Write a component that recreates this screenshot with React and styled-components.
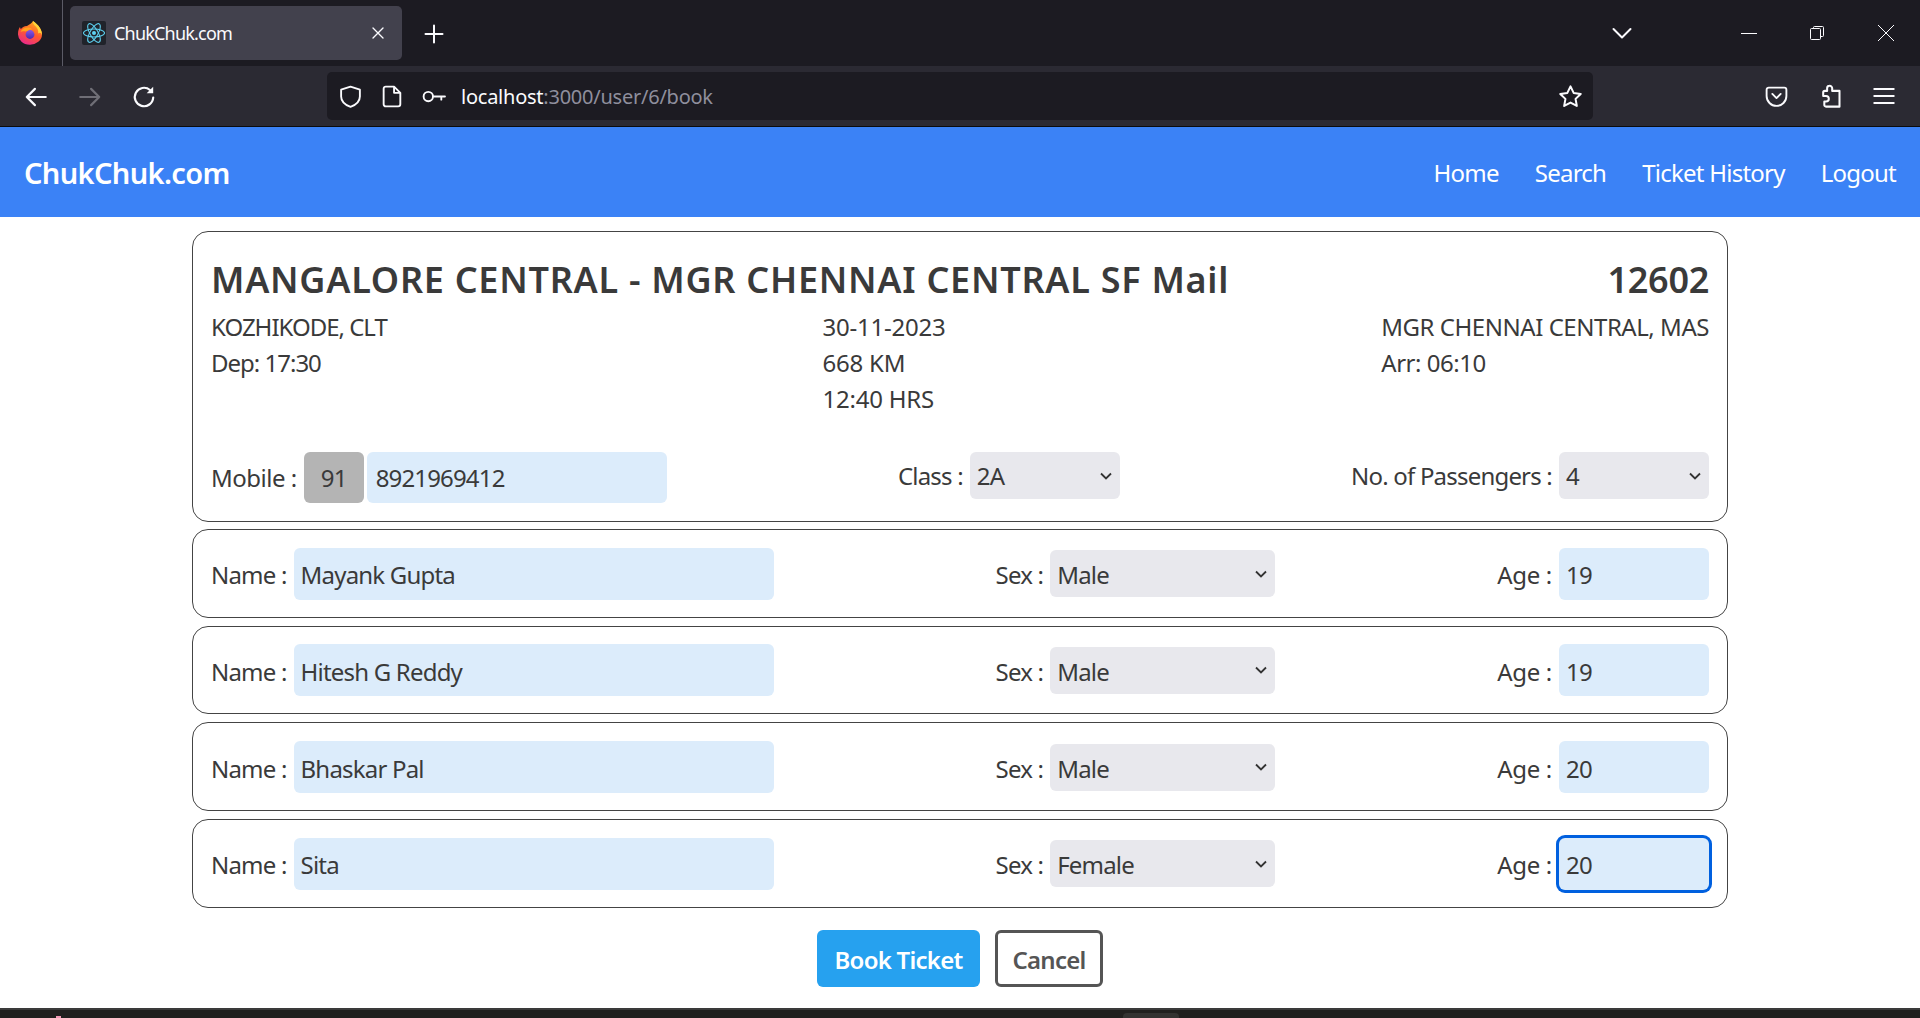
import React from 'react';
import styled, { createGlobalStyle } from 'styled-components';

const FONT = '"Noto Sans", "Open Sans", sans-serif';

const GlobalStyle = createGlobalStyle`
    * { box-sizing: border-box; }
    html, body { margin: 0; padding: 0; height: 100%; background: #fff; }
    body { font-family: ${FONT}; color: #3a3a3a; letter-spacing: -0.8px; overflow: hidden; }
`

const Page = styled.div`
    display: flex;
    flex-direction: column;
    height: 1018px;
    overflow: hidden;
`

/* browser frame */
const TabBar = styled.div`
    display: flex;
    align-items: stretch;
    height: 66px;
    flex-shrink: 0;
    background: #1c1b22;
    color: #fbfbfe;
`
const AppCell = styled.div`
    display: flex;
    align-items: center;
    justify-content: center;
    width: 63px;
    padding-right: 3px;
    border-right: 1px solid #5b5b66;
    margin-right: 7px;
`
const Tab = styled.div`
    display: flex;
    align-items: center;
    align-self: center;
    width: 332px;
    height: 54px;
    padding: 0 12px;
    border-radius: 5px;
    background: #42414d;
`
const Favicon = styled.div`
    display: flex;
    align-items: center;
    justify-content: center;
    width: 24px;
    height: 24px;
    margin-right: 8px;
    border-radius: 2px;
    background: #20232a;
`
const TabTitle = styled.span`
    flex: 1;
    font-size: 18px;
`
const IconBox = styled.div`
    display: flex;
    align-items: center;
    justify-content: center;
    flex-shrink: 0;
    width: ${props => props.$w || 54}px;
    padding-top: ${props => props.$drop || 0}px;
    color: ${props => props.$dim ? '#6f6e76' : '#fbfbfe'};
`
const Spacer = styled.div`
    flex: 1;
`
const ToolBar = styled.div`
    display: flex;
    align-items: stretch;
    height: 60px;
    flex-shrink: 0;
    padding-left: 9px;
    background: #2b2a33;
`
const UrlBar = styled.div`
    display: flex;
    align-items: center;
    align-self: center;
    width: 1266px;
    height: 48px;
    margin-left: 156px;
    margin-right: 156px;
    padding-left: 2px;
    border-radius: 5px;
    background: #1c1b22;
    color: #fbfbfe;
    font-size: 20px;
    letter-spacing: -0.24px;
`
const UrlText = styled.div`
    flex: 1;
    margin-left: 7px;
`
const UrlDim = styled.span`
    color: #8f8f9d;
`
const Separator = styled.div`
    height: 1px;
    flex-shrink: 0;
    background: #0c0c0d;
`

/* site */
const Nav = styled.nav`
    display: flex;
    align-items: center;
    justify-content: space-between;
    height: 90px;
    flex-shrink: 0;
    padding: 0 24px;
    background: #3b82f6;
    color: #fff;
`
const Brand = styled.div`
    font-size: 29px;
    font-weight: 600;
    letter-spacing: -0.65px;
`
const NavLinks = styled.div`
    display: flex;
    gap: 36px;
`
const NavLink = styled.a`
    font-size: 24px;
    letter-spacing: -0.76px;
`
const Main = styled.main`
    width: 1536px;
    margin: 14px auto 0;
`
const Card = styled.section`
    height: 291px;
    margin-bottom: 7px;
    padding: 21px 18px 18px;
    border: 1px solid #444;
    border-radius: 16px;
`
const TitleRow = styled.div`
    display: flex;
    justify-content: space-between;
    margin-bottom: 2px;
`
const Title = styled.h1`
    margin: 0;
    font-size: 36px;
    line-height: 54px;
    font-weight: 600;
    letter-spacing: ${props => props.$spacing}px;
`
const Details = styled.div`
    display: flex;
    justify-content: space-between;
    height: 108px;
    margin-bottom: 35px;
`
const DetailCol = styled.div`
    font-size: 24px;
    line-height: 36px;
    letter-spacing: ${props => props.$spacing}px;
`
const ContactRow = styled.div`
    display: flex;
    justify-content: space-between;
    align-items: flex-start;
`
const Group = styled.div`
    display: flex;
    align-items: center;
    font-size: 24px;
`
const Label = styled.label`
    margin-right: 7px;
    letter-spacing: ${props => props.$spacing || -0.8}px;
`
const Prefix = styled.div`
    display: flex;
    align-items: center;
    justify-content: center;
    width: 60px;
    height: 51px;
    margin-right: 3px;
    border-radius: 6px;
    background: #b4b4b4;
`
const Field = styled.input`
    width: ${props => props.$w}px;
    height: ${props => props.$h || 52}px;
    padding: 0 ${props => props.$pad || 7}px;
    border: 0;
    border-radius: 6px;
    outline: 0;
    background: #dcecfb;
    color: inherit;
    font: inherit;
    letter-spacing: ${props => props.$spacing || -0.8}px;
    box-shadow: ${props => props.$focused ? '0 0 0 3px #0060df' : 'none'};
`
const Choice = styled.select`
    appearance: none;
    width: ${props => props.$w}px;
    height: 47px;
    padding: 0 7px;
    border: 0;
    border-radius: 6px;
    background-color: #e8e8ed;
    background-image: url("data:image/svg+xml,%3Csvg xmlns='http://www.w3.org/2000/svg' width='14' height='14' viewBox='0 0 14 14'%3E%3Cpath d='M2 4.5l5 5 5-5' fill='none' stroke='%23333' stroke-width='1.8'/%3E%3C/svg%3E");
    background-repeat: no-repeat;
    background-position: right 7px center;
    color: inherit;
    font: inherit;
    letter-spacing: inherit;
`
const RowList = styled.div`
    display: flex;
    flex-direction: column;
    gap: 8px;
`
const PassengerRow = styled.div`
    display: flex;
    align-items: center;
    justify-content: space-between;
    height: 88.67px;
    padding: 1px 18px 0;
    border: 1px solid #444;
    border-radius: 16px;

    ${Label}, ${Field}, ${Choice} {
        padding-top: 2px;
    }
`
const Actions = styled.div`
    display: flex;
    justify-content: center;
    gap: 15px;
    margin-top: 22px;
`
const PrimaryButton = styled.button`
    width: 163px;
    height: 57px;
    padding: 2px 0 0;
    border: 0;
    border-radius: 6px;
    background: #26a1ef;
    color: #fff;
    font: 600 24px ${FONT};
    letter-spacing: -0.75px;
`
const GhostButton = styled(PrimaryButton)`
    width: 108px;
    border: 3px solid #555;
    background: #fff;
    color: #555;
`
const TaskBar = styled.div`
    display: flex;
    align-items: flex-end;
    height: 10px;
    margin-top: auto;
    flex-shrink: 0;
    border-top: 2px solid #3a3a3a;
    background: #20201e;
`
const TaskDot = styled.div`
    width: 5px;
    height: 2px;
    margin-left: 56px;
    background: #f19ab5;
`
const TaskButton = styled.div`
    width: 56px;
    height: 5px;
    margin-left: 1062px;
    border-radius: 4px 4px 0 0;
    background: #333331;
`

function Stroke({ size = 24, width = 2, children }) {
    return (
        <svg width={size} height={size} viewBox="0 0 24 24" fill="none" stroke="currentColor"
            strokeWidth={width} strokeLinecap="round" strokeLinejoin="round">
            {children}
        </svg>
    )
}

function FirefoxLogo() {
    return (
        <svg width="24" height="24" viewBox="0 0 24 24">
            <defs>
                <linearGradient id="ffBody" x1="0.8" y1="0.05" x2="0.35" y2="1">
                    <stop offset="0" stopColor="#ffb01f" />
                    <stop offset="0.5" stopColor="#ff5a2c" />
                    <stop offset="1" stopColor="#ea2a8a" />
                </linearGradient>
                <linearGradient id="ffCore" x1="0.5" y1="0" x2="0.5" y2="1">
                    <stop offset="0" stopColor="#8a55e6" />
                    <stop offset="1" stopColor="#4a2bb0" />
                </linearGradient>
            </defs>
            <path d="M15 0c2 2.300 5 3.800 7 7 1.400 2.400 2 4.600 2 6.500A12 10.500 0 0 1 0 13c0-3 .8-5.500 2-7 .1.900.4 1.500.9 2C4 6.400 6 5.200 9 5c2-1.400 4.500-2.500 6-5z" fill="url(#ffBody)" />
            <path d="M15 0c-.4 2.200.6 3.600 2.300 5 2.400 2 3.300 4.800 2.900 7.500 1.600-1.400 3-.6 3.800 1.500C24 9 21 4 15 0z" fill="#ffd43a" />
            <circle cx="12" cy="13.500" r="4.400" fill="url(#ffCore)" />
            <path d="M2.500 11c1-3.200 4.500-5 8-4.500 1.800.3 3.200 1.200 4 2.400-2-.6-3.500-.2-4.600.8L7.500 10.500C5.500 10 3.800 10 2.500 11z" fill="#ffa11f" />
        </svg>
    )
}

function ReactLogo() {
    return (
        <svg width="22" height="22" viewBox="-11.500 -11.500 23 23" fill="none" stroke="#5ed3f3" strokeWidth="1.100">
            <circle r="2.100" fill="#5ed3f3" stroke="none" />
            <ellipse rx="11" ry="4.200" />
            <ellipse rx="11" ry="4.200" transform="rotate(60)" />
            <ellipse rx="11" ry="4.200" transform="rotate(120)" />
        </svg>
    )
}

function PassengerFields({ name, sex, age, focused }) {
    return (
        <PassengerRow>
            <Group>
                <Label>Name :</Label>
                <Field $w={480} defaultValue={name} />
            </Group>
            <Group>
                <Label>Sex :</Label>
                <Choice $w={225} defaultValue={sex}>
                    <option>Male</option>
                    <option>Female</option>
                </Choice>
            </Group>
            <Group>
                <Label $spacing={-0.3}>Age :</Label>
                <Field $w={150} $focused={focused} defaultValue={age} />
            </Group>
        </PassengerRow>
    )
}

const passengers = [
    { name: 'Mayank Gupta', sex: 'Male', age: 19 },
    { name: 'Hitesh G Reddy', sex: 'Male', age: 19 },
    { name: 'Bhaskar Pal', sex: 'Male', age: 20 },
    { name: 'Sita', sex: 'Female', age: 20, focused: true },
]

function App() {
    return (
        <Page>
            <GlobalStyle />
            <TabBar>
                <AppCell><FirefoxLogo /></AppCell>
                <Tab>
                    <Favicon><ReactLogo /></Favicon>
                    <TabTitle>ChukChuk.com</TabTitle>
                    <IconBox $w={24}>
                        <Stroke size={20} width={1.600}><path d="M6 6l12 12M18 6L6 18" /></Stroke>
                    </IconBox>
                </Tab>
                <IconBox $w={64} $drop={2}>
                    <Stroke size={24} width={2}><path d="M12 3.500v17M3.500 12h17" /></Stroke>
                </IconBox>
                <Spacer />
                <IconBox $w={60}>
                    <Stroke size={24} width={2}><path d="M3.500 8l8.500 8.500L20.500 8" /></Stroke>
                </IconBox>
                <IconBox $w={62} />
                <IconBox $w={69}>
                    <svg width="16" height="16" viewBox="0 0 16 16" stroke="currentColor" fill="none"><path d="M0 8.500h16" /></svg>
                </IconBox>
                <IconBox $w={68}>
                    <svg width="16" height="16" viewBox="0 0 16 16" stroke="currentColor" fill="none">
                        <rect x="1.500" y="3.500" width="10" height="11" rx="1" />
                        <path d="M4.500 3.500V2.500a1 1 0 0 1 1-1h8a1 1 0 0 1 1 1v8a1 1 0 0 1-1 1h-2" />
                    </svg>
                </IconBox>
                <IconBox $w={69}>
                    <svg width="18" height="18" viewBox="0 0 18 18" stroke="currentColor" fill="none"><path d="M1 1l16 16M17 1L1 17" /></svg>
                </IconBox>
            </TabBar>
            <ToolBar>
                <IconBox $drop={2}><Stroke size={26} width={2}><path d="M21 12H3.500M11 4.500L3.500 12l7.500 7.500" /></Stroke></IconBox>
                <IconBox $dim $drop={2}><Stroke size={26} width={2}><path d="M3 12h17.500M13 4.500l7.500 7.500-7.500 7.500" /></Stroke></IconBox>
                <IconBox $drop={2}>
                    <Stroke size={26} width={2}>
                        <path d="M20.500 12.500a8.500 8.500 0 1 1-3-7" />
                        <path d="M20.500 2.500v6h-6z" fill="currentColor" stroke="none" />
                    </Stroke>
                </IconBox>
                <UrlBar>
                    <IconBox $w={42} $drop={1}>
                        <Stroke size={25} width={1.800}><path d="M12 2.500l9 3v6.500c0 4.800-3.600 8-9 10-5.400-2-9-5.200-9-10V5.500z" /></Stroke>
                    </IconBox>
                    <IconBox $w={42} $drop={1}>
                        <Stroke size={25} width={1.800}><path d="M5.500 2.500h8l6 6v11a2 2 0 0 1-2 2h-12a2 2 0 0 1-2-2v-15a2 2 0 0 1 2-2zM13.500 2.500v6h6" /></Stroke>
                    </IconBox>
                    <IconBox $w={41} $drop={1}>
                        <Stroke size={25} width={1.800}><circle cx="7" cy="12" r="4.500" /><path d="M11.500 12H23M19.500 12v3" /></Stroke>
                    </IconBox>
                    <UrlText>localhost<UrlDim>:3000/user/6/book</UrlDim></UrlText>
                    <IconBox $w={46}>
                        <Stroke size={27} width={1.800}><path d="M12 3l2.800 5.800 6.300.9-4.600 4.400 1.100 6.300-5.600-3-5.600 3 1.100-6.300-4.600-4.400 6.300-.9z" /></Stroke>
                    </IconBox>
                </UrlBar>
                <IconBox>
                    <Stroke size={25} width={1.800}>
                        <path d="M4.500 3.500h15a2 2 0 0 1 2 2v6a9.500 9.500 0 0 1-19 0v-6a2 2 0 0 1 2-2z" />
                        <path d="M8 9.500l4 4 4-4" />
                    </Stroke>
                </IconBox>
                <IconBox>
                    <Stroke size={27} width={1.800}>
                        <path d="M11 2.500a2.200 2.200 0 0 1 2.500 2.200v2.300h6.500v14H8a1.500 1.500 0 0 1-1.500-1.500v-3h1.500a2.500 2.500 0 0 0 0-5H5.500V8.500A1.500 1.500 0 0 1 7 7h2V4.700A2.200 2.200 0 0 1 11 2.500z" />
                    </Stroke>
                </IconBox>
                <IconBox>
                    <Stroke size={26} width={1.800}><path d="M3 5.500h18M3 12h18M3 18.500h18" /></Stroke>
                </IconBox>
            </ToolBar>
            <Separator />
            <Nav>
                <Brand>ChukChuk.com</Brand>
                <NavLinks>
                    <NavLink>Home</NavLink>
                    <NavLink>Search</NavLink>
                    <NavLink>Ticket History</NavLink>
                    <NavLink>Logout</NavLink>
                </NavLinks>
            </Nav>
            <Main>
                <Card>
                    <TitleRow>
                        <Title $spacing={0.73}>MANGALORE CENTRAL - MGR CHENNAI CENTRAL SF Mail</Title>
                        <Title $spacing={-0.3}>12602</Title>
                    </TitleRow>
                    <Details>
                        <DetailCol $spacing={-1}>KOZHIKODE, CLT<br />Dep: 17:30</DetailCol>
                        <DetailCol $spacing={-0.24}>30-11-2023<br />668 KM<br />12:40 HRS</DetailCol>
                        <DetailCol $spacing={-0.46}>MGR CHENNAI CENTRAL, MAS<br />Arr: 06:10</DetailCol>
                    </Details>
                    <ContactRow>
                        <Group>
                            <Label $spacing={-0.5}>Mobile :</Label>
                            <Prefix>91</Prefix>
                            <Field $w={300} $h={51} $pad={9} $spacing={-0.84} defaultValue="8921969412" />
                        </Group>
                        <Group>
                            <Label>Class :</Label>
                            <Choice $w={150} defaultValue="2A">
                                <option>2A</option>
                                <option>3A</option>
                                <option>SL</option>
                            </Choice>
                        </Group>
                        <Group>
                            <Label>No. of Passengers :</Label>
                            <Choice $w={150} defaultValue="4">
                                <option>1</option>
                                <option>2</option>
                                <option>3</option>
                                <option>4</option>
                            </Choice>
                        </Group>
                    </ContactRow>
                </Card>
                <RowList>
                    {passengers.map(p => <PassengerFields key={p.name} {...p} />)}
                </RowList>
                <Actions>
                    <PrimaryButton>Book Ticket</PrimaryButton>
                    <GhostButton>Cancel</GhostButton>
                </Actions>
            </Main>
            <TaskBar>
                <TaskDot />
                <TaskButton />
            </TaskBar>
        </Page>
    )
}

export default App;
